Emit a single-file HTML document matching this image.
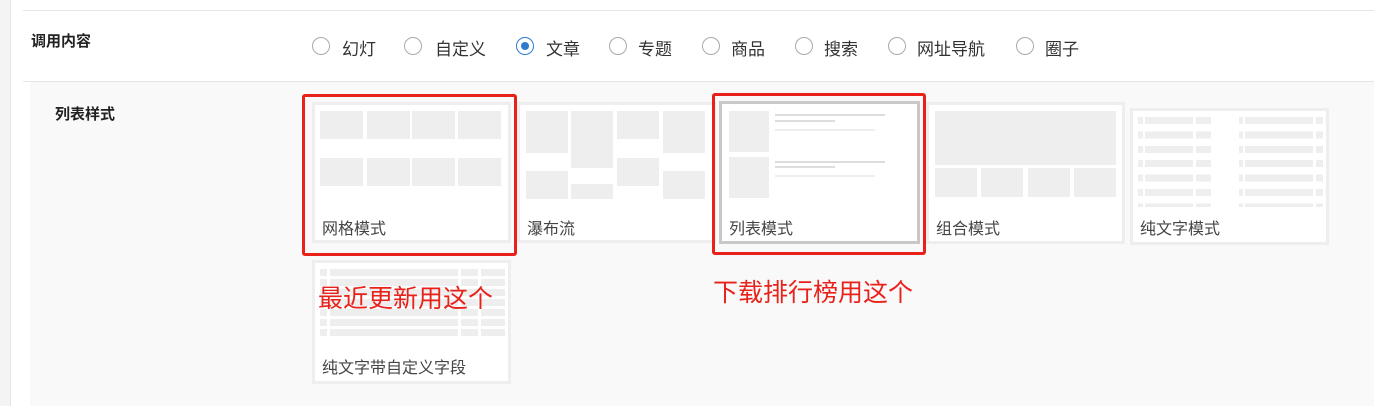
<!DOCTYPE html><html><head><meta charset="utf-8"><style>
body{margin:0;width:1374px;height:406px;background:#fff;font-family:"Liberation Sans","Noto Sans CJK SC",sans-serif;position:relative;overflow:hidden}
.a{position:absolute}
.card{position:absolute;background:#fff;border:3px solid #eee;box-sizing:border-box}
.g{position:absolute;background:#eee}
.lbl{position:absolute;font-size:16px;color:#444;left:7px}
.radio{position:absolute;top:37px;width:18px;height:18px;border:1px solid #aaa;border-radius:50%;box-sizing:border-box;background:#fff}
.rl{position:absolute;top:35px;font-size:17px;color:#333}
.red{position:absolute;border:3px solid #e8221a;border-radius:3px;box-sizing:border-box}
.rt{position:absolute;color:#e8221a;font-size:25px}
</style></head><body>
<div class="a" style="left:0;top:0;width:10px;height:406px;background:#f4f4f4;border-right:1px solid #e5e5e5"></div>
<div class="a" style="left:23px;top:10px;width:1351px;height:1px;background:#e5e5e5"></div>
<div class="a" style="left:23px;top:81px;width:1351px;height:1px;background:#e5e5e5"></div>
<div class="a" style="left:30px;top:82px;width:1344px;height:324px;background:#f9f9f9"></div>
<div class="a" style="left:31px;top:30px;font-size:15px;font-weight:bold;color:#222">调用内容</div>
<div class="a" style="left:55px;top:103px;font-size:15px;font-weight:bold;color:#222">列表样式</div>

<div class="radio" style="left:312px"></div><div class="rl" style="left:342px">幻灯</div>
<div class="radio" style="left:404px"></div><div class="rl" style="left:435px">自定义</div>
<div class="radio" style="left:516px;border-color:#2e7bcf"><div class="a" style="left:4px;top:4px;width:8px;height:8px;border-radius:50%;background:#2e7bcf"></div></div><div class="rl" style="left:546px">文章</div>
<div class="radio" style="left:609px"></div><div class="rl" style="left:638px">专题</div>
<div class="radio" style="left:702px"></div><div class="rl" style="left:731px">商品</div>
<div class="radio" style="left:795px"></div><div class="rl" style="left:824px">搜索</div>
<div class="radio" style="left:888px"></div><div class="rl" style="left:917px">网址导航</div>
<div class="radio" style="left:1016px"></div><div class="rl" style="left:1045px">圈子</div>

<div class="card" style="left:312px;top:102px;width:199px;height:141px">
<div class="g" style="left:5px;top:6px;width:43px;height:28px"></div><div class="g" style="left:52px;top:6px;width:43px;height:28px"></div><div class="g" style="left:97px;top:6px;width:43px;height:28px"></div><div class="g" style="left:143px;top:6px;width:43px;height:28px"></div>
<div class="g" style="left:5px;top:53px;width:43px;height:28px"></div><div class="g" style="left:52px;top:53px;width:43px;height:28px"></div><div class="g" style="left:97px;top:53px;width:43px;height:28px"></div><div class="g" style="left:143px;top:53px;width:43px;height:28px"></div>
<div class="lbl" style="top:110px">网格模式</div></div>
<div class="card" style="left:517px;top:102px;width:199px;height:141px">
<div class="g" style="left:6px;top:6px;width:42px;height:42px"></div><div class="g" style="left:51px;top:6px;width:42px;height:57px"></div><div class="g" style="left:97px;top:6px;width:42px;height:28px"></div><div class="g" style="left:143px;top:6px;width:42px;height:42px"></div>
<div class="g" style="left:6px;top:66px;width:42px;height:28px"></div><div class="g" style="left:51px;top:79px;width:42px;height:15px"></div><div class="g" style="left:97px;top:53px;width:42px;height:28px"></div><div class="g" style="left:143px;top:66px;width:42px;height:28px"></div>
<div class="lbl" style="top:110px">瀑布流</div></div>
<div class="card" style="left:719px;top:101px;width:201px;height:143px;border-color:#c8c8c8">
<div class="g" style="left:7px;top:7px;width:40px;height:41px"></div><div class="g" style="left:7px;top:53px;width:40px;height:41px"></div>
<div class="g" style="left:53px;top:10px;width:110px;height:2px;background:#ddd"></div><div class="g" style="left:53px;top:16px;width:60px;height:2px;background:#ddd"></div><div class="g" style="left:53px;top:25px;width:100px;height:2px"></div>
<div class="g" style="left:53px;top:57px;width:110px;height:2px;background:#ddd"></div><div class="g" style="left:53px;top:62px;width:60px;height:2px;background:#ddd"></div><div class="g" style="left:53px;top:71px;width:100px;height:2px"></div>
<div class="lbl" style="top:111px">列表模式</div></div>
<div class="card" style="left:926px;top:102px;width:199px;height:142px">
<div class="g" style="left:6px;top:6px;width:181px;height:54px"></div>
<div class="g" style="left:6px;top:63px;width:42px;height:29px"></div><div class="g" style="left:52px;top:63px;width:42px;height:29px"></div><div class="g" style="left:99px;top:63px;width:42px;height:29px"></div><div class="g" style="left:145px;top:63px;width:42px;height:29px"></div>
<div class="lbl" style="top:110px">组合模式</div></div>
<div class="card" style="left:1130px;top:108px;width:199px;height:137px">
<div class="a" style="left:5px;top:6px;width:185px;height:90px;background:repeating-linear-gradient(#eee 0 7px,#fff 7px 14.4px)"></div>
<div class="a" style="left:10px;top:6px;width:2px;height:90px;background:#fff"></div><div class="a" style="left:60px;top:6px;width:3px;height:90px;background:#fff"></div>
<div class="a" style="left:78px;top:6px;width:28px;height:90px;background:#fff"></div>
<div class="a" style="left:110px;top:6px;width:2px;height:90px;background:#fff"></div><div class="a" style="left:180px;top:6px;width:3px;height:90px;background:#fff"></div>
<div class="lbl" style="top:104px">纯文字模式</div></div>
<div class="card" style="left:312px;top:260px;width:199px;height:124px">
<div class="a" style="left:5px;top:6px;width:185px;height:68px;background:repeating-linear-gradient(#eee 0 7px,#fff 7px 10px)"></div>
<div class="a" style="left:12px;top:6px;width:3px;height:68px;background:#fff"></div><div class="a" style="left:143px;top:6px;width:3px;height:68px;background:#fff"></div><div class="a" style="left:163px;top:6px;width:3px;height:68px;background:#fff"></div>
<div class="lbl" style="top:91px">纯文字带自定义字段</div></div>

<div class="red" style="left:302px;top:94px;width:215px;height:162px"></div>
<div class="red" style="left:712px;top:93px;width:214px;height:162px"></div>
<div class="rt" style="left:318px;top:279px">最近更新用这个</div>
<div class="rt" style="left:713px;top:273px">下载排行榜用这个</div>
</body></html>
